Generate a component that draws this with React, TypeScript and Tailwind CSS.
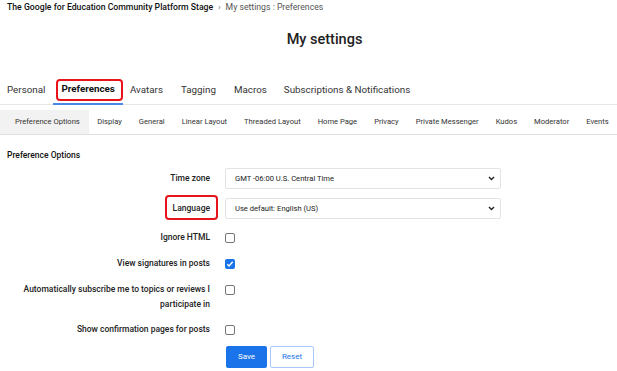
import React from "react";

const subTabs = ["Preference Options","Display","General","Linear Layout","Threaded Layout","Home Page","Privacy","Private Messenger","Kudos","Moderator","Events"];

function Check({ checked }: { checked?: boolean }) {
  return checked ? (
    <div className="w-[10px] h-[10px] rounded-[2px] bg-[#1a73e8] flex items-center justify-center">
      <svg width="8" height="8" viewBox="0 0 8 8"><path d="M1.3 4.2 L3.1 6 L6.7 1.8" stroke="white" strokeWidth="1.4" fill="none" /></svg>
    </div>
  ) : (
    <div className="w-[10px] h-[10px] rounded-[2px] border border-[#767676] bg-white" />
  );
}

function Select({ value }: { value: string }) {
  return (
    <div className="w-[276px] h-[21px] border border-[#e3e3e3] rounded-[2px] flex items-center justify-between pl-[9px] pr-[5px] text-[7.6px] text-[#222]">
      <span>{value}</span>
      <svg width="7" height="5" viewBox="0 0 7 5"><path d="M1 1 L3.5 3.5 L6 1" stroke="#222" strokeWidth="1.4" fill="none" /></svg>
    </div>
  );
}

function Row({ label, children, h, boxed, lh }: { label: React.ReactNode; children: React.ReactNode; h: string; boxed?: boolean; lh: string }) {
  return (
    <div className={`flex items-start ${h}`}>
      <div className={`w-[210px] pl-[16px] flex justify-end text-right text-[8.5px] ${lh} font-medium text-[#222]`}>
        {boxed ? (
          <div className="relative">
            <span>{label}</span>
            <div className="absolute left-[-8px] right-[-8px] top-[-3px] bottom-[-1px] border-2 border-[#e8141b] rounded-[4px]" />
          </div>
        ) : (
          <span>{label}</span>
        )}
      </div>
      <div className="ml-[15px]">{children}</div>
    </div>
  );
}

export default function App() {
  return (
    <div className="w-[617px] h-[371px] bg-white overflow-hidden text-[#222]" style={{ fontFamily: "Roboto, 'Noto Sans', sans-serif" }}>
      <div className="flex items-center h-[16px] pl-[7px] text-[8.7px]">
        <span className="font-medium text-[#111]">The Google for Education Community Platform Stage</span>
        <span className="mx-[5px] text-[#555] text-[8px]">›</span>
        <span className="text-[#555]">My settings : Preferences</span>
      </div>
      <div className="pl-[32px] text-center text-[14.5px] font-medium text-[#222] mt-[13px] leading-[22px]">My settings</div>
      <div className="mt-[20px] flex items-end h-[34px] border-b border-[#e6e6e6] pl-[7px] text-[9.8px] leading-[12px] text-[#333]">
        <div className="pb-[8px] mr-[8px]">Personal</div>
        <div className="relative px-[8px] pb-[8px] border-b-2 border-[#4a86e8] -mb-[1px]">
          <span className="font-bold text-[#111]">Preferences</span>
          <div className="absolute left-[3px] right-[0px] top-[-4px] bottom-[2px] border-2 border-[#e8141b] rounded-[4px]" />
        </div>
        <div className="pb-[8px] ml-[7px] mr-[18px]">Avatars</div>
        <div className="pb-[8px] mr-[18px]">Tagging</div>
        <div className="pb-[8px] mr-[17px]">Macros</div>
        <div className="pb-[8px]">Subscriptions &amp; Notifications</div>
      </div>
      <div className="mt-[5px] flex h-[25px] border-b border-[#e0e0e0] text-[7.6px] text-[#333] whitespace-nowrap">
        {subTabs.map((t, i) => (
          <div key={t} className={`flex items-center ${i === 0 ? "bg-[#f2f2f2] pl-[15px] pr-[9px]" : "px-[8.5px]"}`}>{t}</div>
        ))}
      </div>
      <div className="pl-[7px] mt-[14px] text-[8.5px] leading-[12px] font-medium text-[#111]">Preference Options</div>
      <div className="mt-[7px] flex flex-col">
        <Row label="Time zone" h="h-[30px]" lh="leading-[21px]"><Select value="GMT -06:00 U.S. Central Time" /></Row>
        <Row label="Language" h="h-[32px]" lh="leading-[21px]" boxed><Select value="Use default: English (US)" /></Row>
        <Row label="Ignore HTML" h="h-[26px]" lh="leading-[15px]"><div className="mt-[3px]"><Check /></div></Row>
        <Row label="View signatures in posts" h="h-[26px]" lh="leading-[15px]"><div className="mt-[3px]"><Check checked /></div></Row>
        <Row label="Automatically subscribe me to topics or reviews I participate in" h="h-[40px]" lh="leading-[15px]"><div className="mt-[3px]"><Check /></div></Row>
        <Row label="Show confirmation pages for posts" h="h-[24px]" lh="leading-[15px]"><div className="mt-[3px]"><Check /></div></Row>
        <div className="flex ml-[226px] gap-[3px]">
          <div className="w-[41px] h-[22px] rounded-[2px] bg-[#1a73e8] text-white text-[8px] flex items-center justify-center">Save</div>
          <div className="w-[44px] h-[22px] rounded-[2px] border border-[#a8c7fa] text-[#1a73e8] text-[8px] flex items-center justify-center">Reset</div>
        </div>
      </div>
    </div>
  );
}
